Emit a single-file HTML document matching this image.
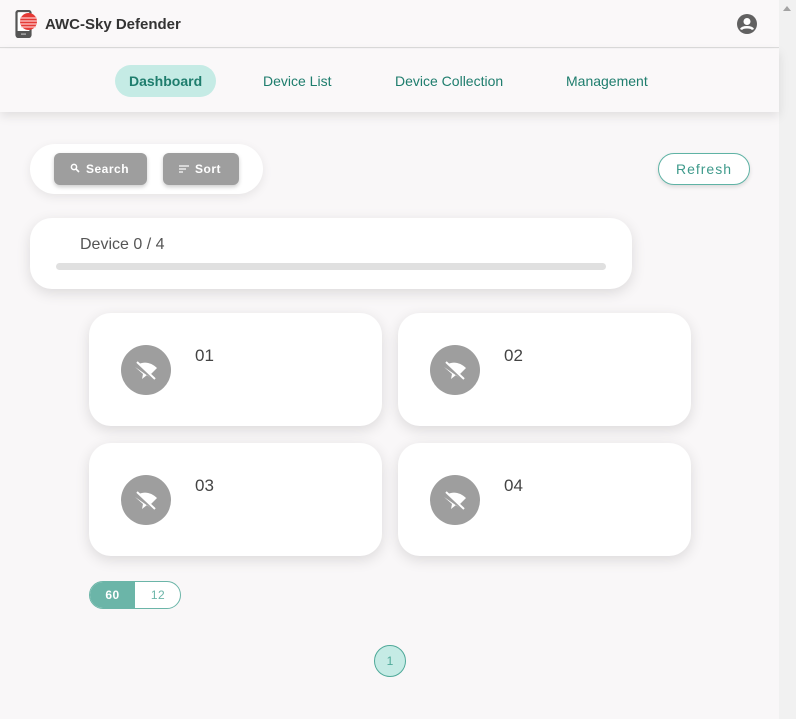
<!DOCTYPE html>
<html><head><meta charset="utf-8"><style>
*{box-sizing:border-box;margin:0;padding:0}
body{width:796px;height:719px;overflow:hidden;background:#f9f7f8;font-family:"Liberation Sans",Roboto,sans-serif;position:relative}
.sb{position:absolute;right:0;top:0;width:17px;height:719px;background:#f1f1f1}
.sb:before{content:"";position:absolute;left:4px;top:6px;border-left:4px solid transparent;border-right:4px solid transparent;border-bottom:5px solid #a3a3a3}
.top{position:absolute;left:0;top:0;width:779px;height:48px;border-bottom:1px solid #dcdcdc;background:#faf8f9}
.title{position:absolute;left:45px;top:16px;font-size:15px;font-weight:bold;color:#333}
.nav{position:absolute;left:0;top:49px;width:779px;height:63px;background:#faf8f9;box-shadow:0 4px 10px rgba(0,0,0,.1)}
.nav a{position:absolute;top:16px;height:32px;line-height:32px;font-size:14px;color:#1e7d6d;text-decoration:none}
.pill{background:#c5ebe5;border-radius:16px;padding:0 14px;font-weight:bold}
.card{position:absolute;background:#fff;box-shadow:0 4px 14px rgba(0,0,0,.12)}
.btn{position:absolute;top:9px;height:32px;background:#9e9e9e;border-radius:6px;color:#fff;font-size:12px;font-weight:bold;line-height:32px;letter-spacing:.5px;box-shadow:0 2px 4px rgba(0,0,0,.2)}
.dev{width:293px;height:113px;border-radius:22px}
.ic{position:absolute;left:32px;top:32px;width:50px;height:50px;border-radius:50%;background:#9e9e9e}
.num{position:absolute;left:106px;top:33px;font-size:17px;color:#444}
</style></head><body>
<div class="sb"></div>
<div class="top">
<svg style="position:absolute;left:15px;top:10px" width="24" height="28" viewBox="0 0 24 28"><rect x="1.5" y="1" width="14" height="26" rx="2" fill="#fff" stroke="#555" stroke-width="2.2"/><rect x="1.5" y="21" width="14" height="6" fill="#555"/><rect x="6" y="23.5" width="5" height="1.2" fill="#bbb"/><circle cx="13.5" cy="11.5" r="8.5" fill="#e53935"/><g stroke="#fcc" stroke-width="1.2"><line x1="5" y1="8" x2="22" y2="8"/><line x1="5" y1="11" x2="22" y2="11"/><line x1="5" y1="14" x2="22" y2="14"/><line x1="6" y1="17" x2="21" y2="17"/></g></svg>
<div class="title">AWC-Sky Defender</div>
<svg style="position:absolute;left:737px;top:14px" width="20" height="20" viewBox="0 0 20 20"><circle cx="10" cy="10" r="10" fill="#616161"/><circle cx="10" cy="7.5" r="3.5" fill="#fff"/><path d="M4 15.5c1.5-3 10.5-3 12 0" stroke="#fff" stroke-width="2.4" fill="none"/></svg>
</div>
<div class="nav">
<a class="pill" style="left:115px">Dashboard</a>
<a style="left:263px">Device List</a>
<a style="left:395px">Device Collection</a>
<a style="left:566px">Management</a>
</div>
<div class="card" style="left:30px;top:144px;width:233px;height:50px;border-radius:25px;box-shadow:0 3px 10px rgba(0,0,0,.08)">
<div class="btn" style="left:24px;width:93px;padding-left:16px"><svg width="10" height="10" viewBox="0 0 10 10" style="margin-right:6px"><circle cx="4" cy="4" r="2.6" stroke="#fff" stroke-width="1.5" fill="none"/><line x1="6" y1="6" x2="9" y2="9" stroke="#fff" stroke-width="1.6"/></svg>Search</div>
<div class="btn" style="left:133px;width:76px;padding-left:16px"><svg width="10" height="8" viewBox="0 0 10 8" style="margin-right:6px"><g stroke="#fff" stroke-width="1.2"><line x1="0" y1="1" x2="10" y2="1"/><line x1="0" y1="4" x2="7" y2="4"/><line x1="0" y1="7" x2="4" y2="7"/></g></svg>Sort</div>
</div>
<div style="position:absolute;left:658px;top:153px;width:92px;height:32px;border:1px solid #5fb3a5;border-radius:16px;background:#fff;color:#3e9a8b;font-size:14px;line-height:30px;text-align:center;letter-spacing:1px;box-shadow:0 2px 4px rgba(0,0,0,.12)">Refresh</div>
<div class="card" style="left:30px;top:218px;width:602px;height:71px;border-radius:22px">
<div style="position:absolute;left:50px;top:18px;font-size:16px;color:#555">Device 0 / 4</div>
<div style="position:absolute;left:26px;top:45px;width:550px;height:7px;border-radius:4px;background:#e0e0e0"></div>
</div>
<div class="card dev" style="left:89px;top:313px"><div class="ic"><svg width="50" height="50" viewBox="0 0 50 50"><path d="M14 22l8 7-1 5 5-4 4 3z M18 19c6-3 13-1 18 4l-6 6z" fill="#fff"/><line x1="16" y1="17" x2="34" y2="34" stroke="#fff" stroke-width="2"/></svg></div><div class="num">01</div></div>
<div class="card dev" style="left:398px;top:313px"><div class="ic"><svg width="50" height="50" viewBox="0 0 50 50"><path d="M14 22l8 7-1 5 5-4 4 3z M18 19c6-3 13-1 18 4l-6 6z" fill="#fff"/><line x1="16" y1="17" x2="34" y2="34" stroke="#fff" stroke-width="2"/></svg></div><div class="num">02</div></div>
<div class="card dev" style="left:89px;top:443px"><div class="ic"><svg width="50" height="50" viewBox="0 0 50 50"><path d="M14 22l8 7-1 5 5-4 4 3z M18 19c6-3 13-1 18 4l-6 6z" fill="#fff"/><line x1="16" y1="17" x2="34" y2="34" stroke="#fff" stroke-width="2"/></svg></div><div class="num">03</div></div>
<div class="card dev" style="left:398px;top:443px"><div class="ic"><svg width="50" height="50" viewBox="0 0 50 50"><path d="M14 22l8 7-1 5 5-4 4 3z M18 19c6-3 13-1 18 4l-6 6z" fill="#fff"/><line x1="16" y1="17" x2="34" y2="34" stroke="#fff" stroke-width="2"/></svg></div><div class="num">04</div></div>
<div style="position:absolute;left:89px;top:581px;width:92px;height:28px;border:1px solid #6bb5a8;border-radius:14px;overflow:hidden;background:#fff;font-size:12px;font-weight:bold;letter-spacing:.5px">
<div style="position:absolute;left:0;top:0;width:45px;height:26px;background:#6bb5a8;color:#fff;text-align:center;line-height:26px">60</div>
<div style="position:absolute;left:45px;top:0;width:46px;height:26px;color:#6bb5a8;text-align:center;line-height:26px;font-weight:normal">12</div>
</div>
<div style="position:absolute;left:374px;top:645px;width:32px;height:32px;border-radius:50%;background:#c5ebe5;border:1px solid #4fa999;color:#4fa999;text-align:center;line-height:30px;font-size:12px">1</div>
</body></html>
